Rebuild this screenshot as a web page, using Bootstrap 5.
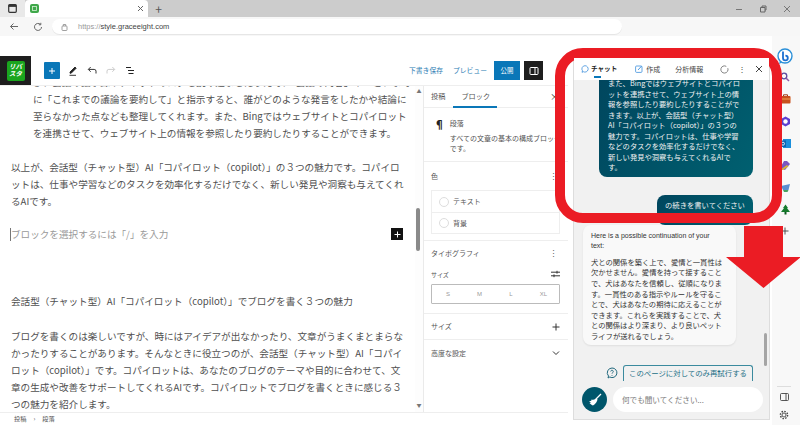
<!DOCTYPE html>
<html lang="ja">
<head>
<meta charset="utf-8">
<title>Editor</title>
<link href="https://cdn.jsdelivr.net/npm/bootstrap@5.3.0/dist/css/bootstrap.min.css" rel="stylesheet">
<style>
html,body{height:425px;overflow:hidden;background:#fff}
body{font-family:"Noto Sans CJK JP","Noto Sans",sans-serif;color:#444;font-size:9.6px;position:relative;width:800px}
svg{display:block;flex:none}
.tabbar{height:17px;background:#ccc}
.tabstart{width:25px;background:#e9e9e9}
.tabitem{width:123px;background:#fff;border-radius:4px 4px 0 0;padding:0 4px 0 5px}
.favi{width:9px;height:9px;background:#3fa84a;border-radius:2px}
.tabplus{width:21px;font-size:12px;color:#555;line-height:17px;text-align:center}
.wincontrols{gap:16px;padding-right:9px}
.addrbar{height:19px;background:#f7f7f7;padding-left:9px}
.urlpill{width:570px;height:15px;margin-left:9px;background:#fff;border-radius:8px;padding-left:9px;font-family:"Liberation Sans",sans-serif;font-size:7.5px;color:#444;box-shadow:0 1px 0 #e6e6e6;gap:10px}
.urlpill span{color:#999}
.reloadicon{margin-left:14px}
.mainrow{height:389px}
.wpcol{width:568px;padding-top:20px}
.wphead{height:29px}
.logobox{width:31px;height:29px;background:#1e1e1e}
.logomark{width:18px;height:20px;background:#1aa51e;border-radius:2px;color:#fff;font-size:6.4px;line-height:7.500px;font-weight:700;font-style:italic;text-align:center;padding-top:2px}
.addblock{width:16px;height:17px;background:#0a77b8;margin-left:13px;margin-right:8px;border-radius:1px}
.toolrow{gap:9px}
.headright{margin-left:auto;padding-right:25px;color:#2b7cb3;font-size:6.8px}
.savelink{margin-right:10px}
.pubbtn{width:26px;height:19px;background:#0a77b8;color:#fff;font-size:6.4px;margin-left:-3px;margin-right:4px}
.panelbtn{width:19px;height:19px;background:#1e1e1e}
.wpbody{height:327px;border-top:1px solid #eee}
.editorarea{width:415px;overflow:hidden;line-height:17px;color:#4f4f4f;white-space:nowrap}
.quote{padding-left:33px;margin-top:-12px}
.para{padding-left:11px;margin:0}
.para1{margin-top:16.500px}
.placeholderline{margin-top:16px;padding-left:10px;padding-right:12px;color:#999;height:17px}
.placeholderline i{border-left:1px solid #777;height:13px;display:block;width:1px}
.blockplus{width:12px;height:12px;background:#111;margin-left:auto}
.para3{margin-top:50.500px}
.para4{margin-top:17.500px}
.edscroll{width:8px;padding:2px 0 0 1px;background:#fdfdfd;color:#777}
.thumb{width:4px;height:43px;background:#8a8a8a;border-radius:2px;margin-top:114px}
.arrowch{font-size:5px;line-height:6px;width:6px;text-align:center}
.sidecol{width:145px;border-left:1px solid #eaeaea;font-size:7px;color:#555}
.sidetabs{height:22px;padding:0 7px;border-bottom:1px solid #eee;gap:9px;font-size:7.2px}
.sidetabs .on{position:relative;height:100%;display:flex;align-items:center;padding:0 7px}
.sidetabs .on::after{content:"";position:absolute;left:-1px;bottom:-1px;height:2px;background:#0a77b8;width:44px}
.sidetabs .closer{margin-left:auto;font-size:9px;color:#333;margin-right:2px}
.sec{border-bottom:1px solid #eee;padding:0 7px}
.blockinfo{height:54px;padding-top:10px;padding-left:10px;line-height:10.500px;white-space:nowrap;overflow:hidden}
.pilcrow{font-size:11px;width:16px;line-height:12px;color:#222;font-weight:700}
.secone{height:79px;padding-top:8px}
.sechd{height:12px}
.dots{margin-left:auto;color:#666;font-size:9px;line-height:9px;margin-right:3px}
.colorbox{border:1px solid #eee;margin-top:8px;width:129px}
.colorline{height:21px;padding-left:7px;gap:4px}
.colorline+.colorline{border-top:1px solid #eee}
.ring{width:10px;height:10px;border:1px solid #ddd;border-radius:50%}
.sectwo{height:73px;padding-top:6px}
.sizerow{margin-top:10px;height:10px;font-size:6px}
.sizebox{width:129px;height:20px;border:1px solid #bbb;border-radius:1px;margin-top:5px;font-family:"Liberation Sans",sans-serif;font-size:6px;color:#999;padding:0 12px 0 14px}
.secthree{height:26px}
.addplus{margin-left:auto;margin-right:1px}
.statusbar{height:13px;border-top:1px solid #eee;padding-left:14px;font-size:6.2px;line-height:1;color:#555;gap:7px}
.copcol{width:204px;padding:22px 2px 5px 5px}
.coppanel{border:1px solid #ddd;border-top:0;background:#f1f1f1;overflow:hidden;height:100%}
.cophead{height:22px;background:#fff;padding:0 6px 0 7px;font-size:7px;color:#444;flex:none;position:relative;z-index:1}
.tabchat{font-weight:700;gap:2px;position:relative;color:#222;font-size:6.600px}
.tabchat::after{content:"";position:absolute;left:13px;width:7px;height:2px;background:#0a77b8;bottom:-4px}
.tabmk{gap:3px;margin-left:18px}
.tabana{margin-left:15px}
.headacts{margin-left:auto;gap:9px;font-size:8px}
.copmsgs{overflow:hidden;flex:1;position:relative;font-size:7.3px;line-height:10.550px}
.bubblea{background:linear-gradient(120deg,#00465e,#006070);color:#f2f2f2;border-radius:0 0 8px 8px;width:154px;margin-left:25px;margin-top:-2px;padding:0 8px 4px 9px;white-space:nowrap}
.bubbleb{background:linear-gradient(120deg,#00465e,#006070);color:#f2f2f2;border-radius:8px;width:96px;margin-left:83px;margin-top:18px;padding:5px 0;text-align:center;height:30px}
.bubblec{background:#f9f9f9;border-radius:8px;width:153px;margin-left:9px;padding:6px 8px 4px;color:#333;white-space:nowrap;box-shadow:0 1px 2px rgba(0,0,0,.08)}
.bubblec p{margin:0 0 5px;font-family:"Liberation Sans","Noto Sans CJK JP",sans-serif;font-size:7px;line-height:10.500px}
.retryrow{margin-top:20px;gap:5px;padding-left:32px}
.retrybtn{width:130px;height:16px;border:1px solid #3b8a9e;border-bottom:0;border-radius:3px 3px 0 0;color:#1b6f86;text-align:center;line-height:14px;font-size:7.400px}
.askrow{padding:6px 0 0 8px;gap:6px}
.broomcircle{width:25px;height:25px;border-radius:50%;background:#00566b}
.askbox{width:150px;height:25px;background:#fff;border-radius:13px;color:#777;padding-left:9px;font-size:7.600px}
.msthumb{position:absolute;right:2px;top:253px;width:3px;height:33px;background:#a5a5a5;border-radius:2px}
.railcol{width:28px;background:#f8f8f8;padding-left:5px}
.slot{height:22px;width:16px}
.slotbing{height:30px;padding-top:11px}
.railend{margin-top:auto;border-top:1px solid #ddd;padding:6px 0 5px;width:14px;gap:9px}
.redframe{position:absolute;left:555px;top:48px;width:227px;height:175px;border:10px solid #eb1c24;border-radius:28px;pointer-events:none}
.redarrow{position:absolute;left:726px;top:226px;pointer-events:none}
</style>
</head>
<body>
<div class="tabbar d-flex">
  <div class="tabstart d-flex align-items-center justify-content-center">
    <svg width="9" height="9" viewBox="0 0 9 9"><rect x=".7" y=".7" width="7.600" height="7.600" rx="1" fill="none" stroke="#333" stroke-width="1.200"/><rect x=".7" y=".7" width="7.600" height="2.200" fill="#333"/></svg>
  </div>
  <div class="tabitem d-flex align-items-center">
    <span class="favi d-flex align-items-center justify-content-center"><svg width="5" height="5" viewBox="0 0 5 5"><rect x=".5" y=".5" width="4" height="4" fill="none" stroke="#d8f2d8" stroke-width=".8"/></svg></span>
    <svg class="ms-auto" width="7" height="7" viewBox="0 0 7 7"><path d="M1 1l5 5M6 1L1 6" stroke="#666" stroke-width="1"/></svg>
  </div>
  <div class="tabplus">+</div>
  <div class="wincontrols d-flex align-items-center ms-auto">
    <svg width="8" height="8" viewBox="0 0 8 8"><path d="M1 4.500h6" stroke="#777" stroke-width="1"/></svg>
    <svg width="8" height="8" viewBox="0 0 8 8"><path d="M1.500 2.500h4.500v4.500h-4.500zM3 2.500V1h4v4H6" fill="none" stroke="#666" stroke-width="1"/></svg>
    <svg width="8" height="8" viewBox="0 0 8 8"><path d="M1 1l6 6M7 1L1 7" stroke="#777" stroke-width="1"/></svg>
  </div>
</div>
<div class="addrbar d-flex align-items-center">
  <svg width="10" height="9" viewBox="0 0 10 9"><path d="M9 4.500H1.500M4.500 1.500l-3 3 3 3" fill="none" stroke="#666" stroke-width="1"/></svg>
  <svg class="reloadicon" width="10" height="10" viewBox="0 0 10 10"><path d="M8.500 5a3.500 3.500 0 1 1-1.200-2.700M7.800 .8v2H5.800" fill="none" stroke="#666" stroke-width="1"/></svg>
  <div class="urlpill d-flex align-items-center">
    <svg width="7" height="8" viewBox="0 0 7 8"><rect x="1" y="3" width="5" height="4.500" rx=".8" fill="none" stroke="#888" stroke-width=".8"/><path d="M2.300 3V1.500h2.400V3" fill="none" stroke="#888" stroke-width=".8"/></svg>
    <div><span>https://</span>style.graceeight.com</div>
  </div>
</div>
<div class="mainrow d-flex">
  <div class="wpcol d-flex flex-column">
    <div class="wphead d-flex align-items-center">
      <div class="logobox d-flex align-items-center justify-content-center"><div class="logomark">リバ<br>スタ</div></div>
      <div class="addblock d-flex align-items-center justify-content-center"><svg width="8" height="8" viewBox="0 0 8 8"><path d="M4 1v6M1 4h6" stroke="#fff" stroke-width="1"/></svg></div>
      <div class="toolrow d-flex align-items-center">
        <svg width="10" height="11" viewBox="0 0 10 11"><path d="M2 7l5-5 1.200 1.200-5 5H2zM1.500 10.300h6.500" fill="#222" stroke="#222" stroke-width=".9"/></svg>
        <svg width="10" height="9" viewBox="0 0 10 9"><path d="M9 7.500V5.200a1.800 1.800 0 0 0-1.800-1.800H1.500M3.700 1L1.300 3.400l2.400 2.400" fill="none" stroke="#333" stroke-width="1"/></svg>
        <svg width="10" height="9" viewBox="0 0 10 9"><path d="M1 7.500V5.200a1.800 1.800 0 0 1 1.800-1.800H8.500M6.300 1l2.400 2.400-2.400 2.400" fill="none" stroke="#ccc" stroke-width="1"/></svg>
        <svg width="10" height="9" viewBox="0 0 10 9"><path d="M1 1.500h5M3 4.500h6M3.500 7.500h5" stroke="#222" stroke-width="1"/></svg>
      </div>
      <div class="headright d-flex align-items-center">
        <span class="savelink">下書き保存</span>
        <span class="savelink">プレビュー</span>
        <div class="pubbtn d-flex align-items-center justify-content-center">公開</div>
        <div class="panelbtn d-flex align-items-center justify-content-center"><svg width="10" height="10" viewBox="0 0 10 10"><rect x="1" y="1.500" width="8" height="7" rx=".8" fill="none" stroke="#fff" stroke-width="1"/><path d="M6 1.500v7" stroke="#fff" stroke-width="1"/></svg></div>
      </div>
    </div>
    <div class="wpbody d-flex">
      <div class="editorarea">
        <div class="quote">び、会議の議事録やチャットのログを読み込ませたうえで、「会議の内容」や「これまでの発言」<br>に「これまでの議論を要約して」と指示すると、誰がどのような発言をしたかや結論に<br>至らなかった点なども整理してくれます。また、Bingではウェブサイトとコパイロット<br>を連携させて、ウェブサイト上の情報を参照したり要約したりすることができます。</div>
        <p class="para para1">以上が、会話型（チャット型）AI「コパイロット（copilot）」の３つの魅力です。コパイロ<br>ットは、仕事や学習などのタスクを効率化するだけでなく、新しい発見や洞察も与えてくれ<br>るAIです。</p>
        <div class="placeholderline d-flex align-items-center"><i></i>ブロックを選択するには「/」を入力<span class="blockplus d-flex align-items-center justify-content-center"><svg width="7" height="7" viewBox="0 0 7 7"><path d="M3.500 .5v6M.5 3.500h6" stroke="#fff" stroke-width="1"/></svg></span></div>
        <p class="para para3">会話型（チャット型）AI「コパイロット（copilot）」でブログを書く３つの魅力</p>
        <p class="para para4">ブログを書くのは楽しいですが、時にはアイデアが出なかったり、文章がうまくまとまらな<br>かったりすることがあります。そんなときに役立つのが、会話型（チャット型）AI「コパイ<br>ロット（copilot）」です。コパイロットは、あなたのブログのテーマや目的に合わせて、文<br>章の生成や改善をサポートしてくれるAIです。コパイロットでブログを書くときに感じる３<br>つの魅力を紹介します。</p>
      </div>
      <div class="edscroll d-flex flex-column">
        <div class="arrowch">▲</div>
        <div class="thumb"></div>
        <div class="arrowch mt-auto mb-1">▼</div>
      </div>
      <div class="sidecol d-flex flex-column">
        <div class="sidetabs d-flex align-items-center"><span>投稿</span><span class="on">ブロック</span><span class="closer">×</span></div>
        <div class="sec blockinfo d-flex"><div class="pilcrow">¶</div><div>段落<div class="mt-1">すべての文章の基本の構成ブロック<br>です。</div></div></div>
        <div class="sec secone">
          <div class="sechd d-flex align-items-center">色<span class="dots">⋮</span></div>
          <div class="colorbox">
            <div class="colorline d-flex align-items-center"><span class="ring"></span>テキスト</div>
            <div class="colorline d-flex align-items-center"><span class="ring"></span>背景</div>
          </div>
        </div>
        <div class="sec sectwo">
          <div class="sechd d-flex align-items-center">タイポグラフィ<span class="dots">⋮</span></div>
          <div class="sizerow d-flex align-items-center">サイズ<svg class="addplus" width="9" height="8" viewBox="0 0 9 8"><path d="M0 2.200h9M0 5.800h9" stroke="#333" stroke-width="1"/><path d="M6 .8v2.800M3 4.400v2.800" stroke="#333" stroke-width="1"/></svg></div>
          <div class="sizebox d-flex align-items-center justify-content-between"><span>S</span><span>M</span><span>L</span><span>XL</span></div>
        </div>
        <div class="sec secthree d-flex align-items-center">サイズ<svg class="addplus" width="8" height="8" viewBox="0 0 8 8"><path d="M4 .5v7M.5 4h7" stroke="#333" stroke-width="1"/></svg></div>
        <div class="sec secthree d-flex align-items-center border-0">高度な設定<svg class="addplus" width="8" height="6" viewBox="0 0 8 6"><path d="M1 1.500l3 3 3-3" fill="none" stroke="#333" stroke-width="1"/></svg></div>
      </div>
    </div>
    <div class="statusbar d-flex align-items-center"><span>投稿</span><span>›</span><span>段落</span></div>
  </div>
  <div class="copcol">
    <div class="coppanel d-flex flex-column">
      <div class="cophead d-flex align-items-center">
        <div class="tabchat d-flex align-items-center"><svg width="8" height="8" viewBox="0 0 8 8"><path d="M4 .7a3.200 3.200 0 1 1-1.600 6L1 7.300l.5-1.500A3.200 3.200 0 0 1 4 .7z" fill="none" stroke="#3d8fdc" stroke-width=".8"/></svg>チャット</div>
        <div class="tabmk d-flex align-items-center"><svg width="8" height="8" viewBox="0 0 8 8"><rect x=".6" y="1" width="6.400" height="6.400" rx="1" fill="none" stroke="#3d8fdc" stroke-width=".8"/><path d="M3 5l3.500-3.800" stroke="#3d8fdc" stroke-width=".9"/></svg>作成</div>
        <div class="tabana">分析情報</div>
        <div class="headacts d-flex align-items-center">
          <svg width="9" height="9" viewBox="0 0 9 9"><path d="M7.800 3.200a3.600 3.600 0 1 1-1.500-1.800" fill="none" stroke="#666" stroke-width=".8"/></svg>
          <span>⋮</span>
          <svg width="8" height="8" viewBox="0 0 8 8"><path d="M1 1l6 6M7 1L1 7" stroke="#444" stroke-width="1"/></svg>
        </div>
      </div>
      <div class="copmsgs">
        <div class="bubblea">また、Bingではウェブサイトとコパイロ<br>ットを連携させて、ウェブサイト上の情<br>報を参照したり要約したりすることがで<br>きます。以上が、会話型（チャット型）<br>AI「コパイロット（copilot）」の３つの<br>魅力です。コパイロットは、仕事や学習<br>などのタスクを効率化するだけでなく、<br>新しい発見や洞察も与えてくれるAIで<br>す。</div>
        <div class="bubbleb">の続きを書いてください</div>
        <div class="bubblec"><p>Here is a possible continuation of your<br>text:</p>犬との関係を築く上で、愛情と一貫性は<br>欠かせません。愛情を持って接すること<br>で、犬はあなたを信頼し、従順になりま<br>す。一貫性のある指示やルールを守るこ<br>とで、犬はあなたの期待に応えることが<br>できます。これらを実践することで、犬<br>との関係はより深まり、より良いペット<br>ライフが送れるでしょう。</div>
        <div class="retryrow d-flex align-items-center">
          <svg width="12" height="12" viewBox="0 0 12 12"><path d="M6 1a4.800 4.800 0 1 1-2.200 9L2 11l.5-2A4.800 4.800 0 0 1 6 1z" fill="none" stroke="#22697e" stroke-width="1"/><path d="M4.700 4.500a1.300 1.300 0 1 1 1.900 1.200c-.4.300-.6.500-.6 1M6 8.200v.8" fill="none" stroke="#22697e" stroke-width=".9"/></svg>
          <div class="retrybtn">このページに対してのみ再試行する</div>
        </div>
        <div class="askrow d-flex">
          <div class="broomcircle d-flex align-items-center justify-content-center"><svg width="14" height="14" viewBox="0 0 14 14"><path d="M13 1L8 6" stroke="#fff" stroke-width="1.300"/><path d="M8.500 5l1 1.500c-.3 2-2 4.500-4.500 6-.8-.3-2-1-3.500-2.500l1.500-.5-2-1.300 2.500-.4L3 6.800C5 7 7 6.500 8.500 5z" fill="#fff"/></svg></div>
          <div class="askbox d-flex align-items-center">何でも聞いてください...</div>
        </div>
        <div class="msthumb"></div>
      </div>
    </div>
  </div>
  <div class="railcol d-flex flex-column">
    <div class="d-flex flex-column">
      <div class="slot slotbing d-flex align-items-center justify-content-center"><svg width="16" height="17" viewBox="0 0 16 17"><circle cx="8" cy="8" r="7" fill="#fff" stroke="#2a8fd8" stroke-width="1.400"/><path d="M6 3.500v6.500a2.400 2.400 0 1 0 2.400-2.400" fill="none" stroke="#1b6fd0" stroke-width="1.800"/><path d="M3 13l-1 3 3-1.500" fill="#2a8fd8"/></svg></div>
      <div class="slot d-flex align-items-center justify-content-center"><svg width="10" height="10" viewBox="0 0 10 10"><circle cx="4" cy="4" r="2.800" fill="none" stroke="#5b4a9e" stroke-width="1.300"/><path d="M6 6l3 3" stroke="#8d58a8" stroke-width="1.500"/></svg></div>
      <div class="slot d-flex align-items-center justify-content-center"><svg width="11" height="10" viewBox="0 0 11 10"><rect x=".5" y="2" width="10" height="7.500" rx="1" fill="#c8501e"/><path d="M3.500 2V.8h4V2" fill="none" stroke="#9c3a1a"/><path d="M.5 5h10" stroke="#f0a050"/></svg></div>
      <div class="slot d-flex align-items-center justify-content-center"><svg width="11" height="11" viewBox="0 0 11 11"><path d="M5.500.5l4.500 2.500v5l-4.500 2.500L1 8V3z" fill="#5c3fd0"/><circle cx="5.500" cy="5.500" r="2.200" fill="#fff"/></svg></div>
      <div class="slot d-flex align-items-center justify-content-center"><svg width="11" height="11" viewBox="0 0 11 11"><rect x="3" y="1" width="8" height="9" fill="#1a8fdc"/><rect x="0" y="2.500" width="6" height="6.500" fill="#0b63b0"/><circle cx="3" cy="5.700" r="1.500" fill="none" stroke="#fff" stroke-width=".8"/></svg></div>
      <div class="slot d-flex align-items-center justify-content-center"><svg width="12" height="11" viewBox="0 0 12 11"><path d="M1 8L5 1h3l3 3-5 6z" fill="#7a55c0"/><path d="M1 10l7-5 1.500 1.500L4 10z" fill="#d6b23a"/></svg></div>
      <div class="slot d-flex align-items-center justify-content-center"><svg width="11" height="9" viewBox="0 0 11 9"><path d="M1 3l9-2-1.500 6H3z" fill="#5a8ed0"/><path d="M3 7l5.500 0-1 2H4z" fill="#4aa060"/></svg></div>
      <div class="slot d-flex align-items-center justify-content-center"><svg width="11" height="11" viewBox="0 0 11 11"><path d="M5.500.5L8 4H7l3 4H1l3-4H3z" fill="#157a2c"/><rect x="4.500" y="8" width="2" height="2.500" fill="#0c5b20"/></svg></div>
      <div class="slot d-flex align-items-center justify-content-center"><svg width="8" height="8" viewBox="0 0 8 8"><path d="M4 .5v7M.5 4h7" stroke="#444" stroke-width=".9"/></svg></div>
    </div>
    <div class="railend d-flex flex-column align-items-center">
      <svg width="9" height="8" viewBox="0 0 9 8"><rect x=".5" y=".5" width="8" height="7" rx="1" fill="none" stroke="#444" stroke-width=".9"/><path d="M6 .5v7" stroke="#444" stroke-width=".9"/></svg>
      <svg width="10" height="10" viewBox="0 0 10 10"><circle cx="5" cy="5" r="2" fill="none" stroke="#444" stroke-width=".9"/><circle cx="5" cy="5" r="3.600" fill="none" stroke="#444" stroke-width="1.400" stroke-dasharray="1.500 1.300"/></svg>
    </div>
  </div>
</div>
<div class="redframe"></div>
<svg class="redarrow" width="75" height="62" viewBox="0 0 75 62"><polygon points="18,0 57,0 57,31 75,31 37.500,62 0,31 18,31" fill="#eb1c24"/></svg>
<script src="https://cdn.jsdelivr.net/npm/bootstrap@5.3.0/dist/js/bootstrap.bundle.min.js"></script>
</body>
</html>
